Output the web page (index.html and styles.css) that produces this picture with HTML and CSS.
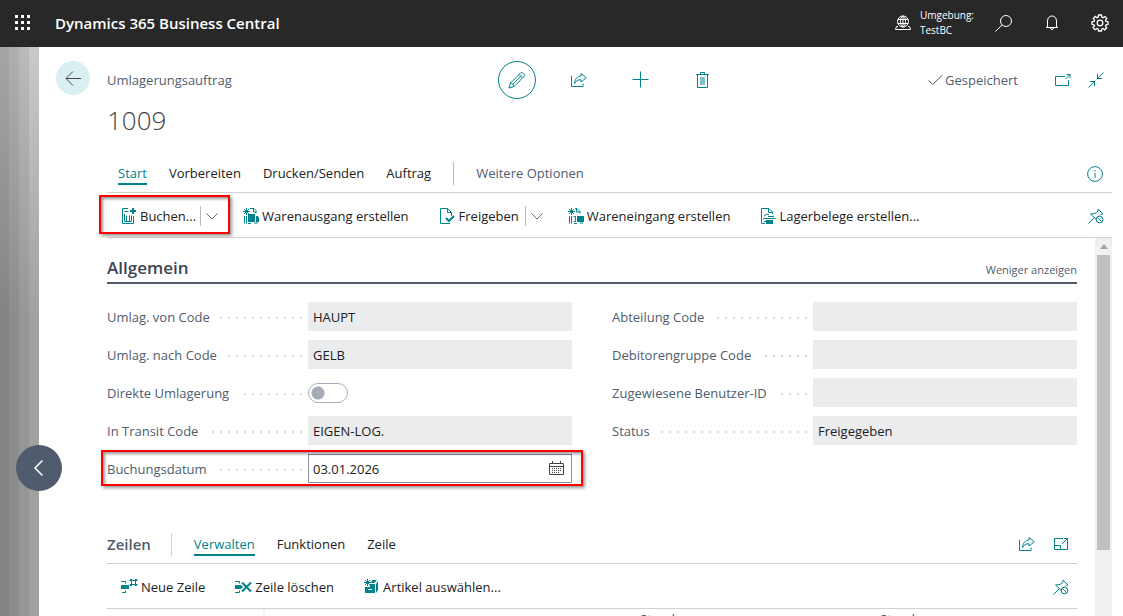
FILE: index.html
```html
<!DOCTYPE html>
<html lang="de">
<head>
<meta charset="utf-8">
<meta name="viewport" content="width=device-width, initial-scale=1">
<title>Umlagerungsauftrag 1009</title>
<link rel="stylesheet" href="styles.css">
</head>
<body>
<svg class="sprite" aria-hidden="true">
  <symbol id="share" viewBox="0 0 16 16"><path d="M.5 4v10.500h11.500v-3M10 1.500l5.200 4.300L10 10V7.700C7 7.700 5 8.700 3.500 11.500 3.700 7.500 6 4.200 10 4z"/></symbol>
  <symbol id="pin" viewBox="0 0 16 16"><path d="M.5 15.500l6-6M2.500 6l6 5.500M2.500 6l4.500-.5L10 3V1l5 5h-1.500l-1.500 1.500"/><circle cx="11.500" cy="11.500" r="3.300"/><path d="M9.300 9.300l4.500 4.500"/></symbol>
  <symbol id="chevron" viewBox="0 0 12 8"><path d="M.5 1.500L6 7l5.500-5.500"/></symbol>
</svg>

<header class="topbar">
  <button class="icon-btn" aria-label="App-Startfeld"><svg class="waffle" viewBox="0 0 16 16"><path d="M0 0h3v3H0zM6 0h3v3H6zM12 0h3v3h-3zM0 6h3v3H0zM6 6h3v3H6zM12 6h3v3h-3zM0 12h3v3H0zM6 12h3v3H6zM12 12h3v3h-3z"/></svg></button>
  <a class="brand" href="#">Dynamics 365 Business Central</a>
  <div class="environment">
    <svg class="line" width="16" height="16" viewBox="0 0 16 16"><circle cx="8" cy="6.500" r="5.500"/><ellipse cx="8" cy="6.500" rx="2.500" ry="5.500"/><path d="M3 4.500h10M3 8.500h10M8 1v11M3 11.500H1.500L.5 14.500h15l-1-3H13"/></svg>
    <span>Umgebung:<br>TestBC</span>
  </div>
  <nav class="system">
    <button class="icon-btn" aria-label="Suchen"><svg class="line" width="18" height="18" viewBox="0 0 18 18"><circle cx="11" cy="7" r="5.500"/><path d="M7 11l-6.500 6.500"/></svg></button>
    <button class="icon-btn" aria-label="Benachrichtigungen"><svg class="line" width="16" height="16" viewBox="0 0 16 16"><path d="M3.500 12V6C3.500 3 5.500 1 8 1s4.500 2 4.500 5v6M2 12.500h12M6.500 13c0 2 3 2 3 0"/></svg></button>
    <button class="icon-btn" aria-label="Einstellungen"><svg class="line gear" width="18" height="18" viewBox="0 0 18 18"><path d="M7.500 1h3l.4 2.200 1.200.5L14 2.500 15.800 4.600l-1.300 1.700.5 1.200 2 .3v2.600l-2 .4-.5 1.200 1.200 1.800-2 2-1.700-1.300-1.200.5-.3 2h-3l-.4-2-1.200-.5-1.800 1.200-2-2L3.500 12 3 10.800 1 10.400V7.800l2-.4.5-1.200L2.300 4.400l2-2 1.700 1.300 1.200-.5z"/><circle cx="9" cy="9" r="2.800"/></svg></button>
  </nav>
</header>

<div class="shell">
  <aside class="backdrop"><button class="prev" aria-label="Vorheriger"><svg class="line chev" width="12" height="18" viewBox="0 0 12 18"><path d="M9.500 1.500L2 9l7.500 7.500"/></svg></button></aside>
  <main class="page">
    <div class="page-head">
      <button class="back" aria-label="Zurück"><svg class="line" width="18" height="16" viewBox="0 0 18 16"><path d="M17 8.500H2M9 1.500l-7 7 7 7"/></svg></button>
      <div class="head-grid">
        <div class="caption">Umlagerungsauftrag</div>
        <div class="head-tools">
          <button class="tool round" aria-label="Bearbeiten"><svg class="line" width="18" height="18" viewBox="0 0 18 18"><path d="M1 17l1.500-5L12.500 2c1.500-1.500 5 1.500 3.500 3.500L6 15.500zM2.500 12c1.700.2 3 1.500 3.500 3.500M11 3.500L14.500 7M4.500 13.500l9-9"/></svg></button>
          <button class="tool" aria-label="Teilen"><svg class="line" width="16" height="16"><use href="#share"/></svg></button>
          <button class="tool" aria-label="Neu"><svg class="line" width="18" height="18" viewBox="0 0 18 18"><path d="M.5 8.500h16M8.500.5v16"/></svg></button>
          <button class="tool" aria-label="Löschen"><svg class="line" width="14" height="16" viewBox="0 0 14 16"><path d="M0 2.500h13M4.500 2V.5h4V2M1.500 3v12.500h10V3"/><path class="soft" d="M4 5h5v8H4z"/></svg></button>
        </div>
        <div class="head-right">
          <span class="saved"><svg class="line" width="15" height="12" viewBox="0 0 15 12"><path d="M.5 6.500L4.500 10.500 14.500 1"/></svg>Gespeichert</span>
          <button class="tool small" aria-label="In neuem Fenster öffnen"><svg class="line" width="16" height="14" viewBox="0 0 16 14"><path d="M10 3.500H.5v9h13V7M10.500 6L15 1.500M11.500 1.500h3.500V5"/></svg></button>
          <button class="tool small" aria-label="Verkleinern"><svg class="line" width="16" height="16" viewBox="0 0 16 16"><path d="M15.500.5L9.500 6.500M9.500 2v4.500H14M.5 15.500l6-6M2 9.500h4.500V14"/></svg></button>
        </div>
      </div>
      <h1 class="title">1009</h1>
    </div>

    <nav class="tabs rule">
      <button class="tab active">Start</button>
      <button class="tab">Vorbereiten</button>
      <button class="tab">Drucken/Senden</button>
      <button class="tab">Auftrag</button>
      <span class="divider"></span>
      <button class="tab muted">Weitere Optionen</button>
      <button class="icon-btn end" aria-label="Info"><svg class="line" width="16" height="16" viewBox="0 0 16 16"><circle cx="8" cy="8" r="7.400"/><path d="M8 7v5M8 4v1.500"/></svg></button>
    </nav>

    <div class="actions rule">
      <div class="split marked">
        <button class="action"><svg class="line" width="16" height="16" viewBox="0 0 16 16"><path d="M7 .5H1.500v15h11V8M3.500 3.500h4M3.500 6v7.500M5.500 13.500V7.500M8.500 13.500V7.500M10.500 13.500V7.500M3.500 13.500h7"/><path class="bold" d="M12 0v6M9 3h6"/></svg>Buchen...</button>
        <button class="drop" aria-label="Weitere Buchungsoptionen"><svg class="line" width="12" height="8"><use href="#chevron"/></svg></button>
      </div>
      <button class="action"><svg class="line" width="16" height="16" viewBox="0 0 16 16"><path d="M3.500 0v7M0 3.500h7M1 1l5 5M6 1L1 6M7 .5h4l2 2v3M10.500 1v3H13M1.500 8v7.500M3.500 8v7.500"/><path class="solid" d="M5 6h7v8H5zM13 8h2l1 2v4h-3z"/><path class="cut" d="M12.500 6v8"/><path d="M5 15.500h3M11 15h4"/></svg>Warenausgang erstellen</button>
      <div class="split release">
        <button class="action"><svg class="line" width="16" height="16" viewBox="0 0 16 16"><path d="M11.500 8V4.500l-4-4H.500v15H10M7.500.5v4h4"/><path class="bold" d="M6 10l3 3 5-5"/></svg>Freigeben</button>
        <button class="drop" aria-label="Weitere Freigabeoptionen"><svg class="line" width="12" height="8"><use href="#chevron"/></svg></button>
      </div>
      <button class="action"><svg class="line" width="16" height="16" viewBox="0 0 16 16"><path d="M3.500 0v7M0 3.500h7M1 1l5 5M6 1L1 6M7 .5h2l3 3v2M8.500 1v3H12M1.500 8v7.500M3.500 8v7.500M5.500 8.500h2v5h-2"/><path class="solid" d="M9 8h7v6H9z"/><path d="M6 15.500h3M12 15h3"/></svg>Wareneingang erstellen</button>
      <button class="action"><svg class="line" width="15" height="16" viewBox="0 0 15 16"><path d="M11.500 6V4L8 .5H.5v15H4M7.500.5v4h4M3 8l3-2 2 1M2 10.500h12.500M3 13.500h2"/><path class="solid" d="M7 8h6v1H7zM5 12h7v4H5z"/></svg>Lagerbelege erstellen...</button>
      <button class="icon-btn end" aria-label="Anheften"><svg class="line" width="16" height="16"><use href="#pin"/></svg></button>
    </div>

    <div class="scroller">
      <div class="body">
        <div class="section-head">
          <h2>Allgemein</h2>
          <button class="less">Weniger anzeigen</button>
        </div>
        <form class="fields">
          <div class="column">
            <div class="field"><label for="from">Umlag. von Code</label><i class="dots"></i><input id="from" value="HAUPT" readonly></div>
            <div class="field"><label for="to">Umlag. nach Code</label><i class="dots"></i><input id="to" value="GELB" readonly></div>
            <div class="field"><label for="direct">Direkte Umlagerung</label><i class="dots"></i><span class="switch"><input id="direct" type="checkbox" role="switch"></span></div>
            <div class="field"><label for="transit">In Transit Code</label><i class="dots"></i><input id="transit" value="EIGEN-LOG." readonly></div>
            <div class="field date"><label for="date">Buchungsdatum</label><i class="dots"></i><input id="date" value="03.01.2026"><button type="button" class="calendar" aria-label="Kalender"><svg class="line" width="16" height="15" viewBox="0 0 16 15"><path d="M.5 2.500h14v11H.5zM.5 5.500h14M3.500 0v3M11.500 0v3"/><path class="ticks" d="M3 7.500h10M3 9.500h10M3 11.500h8"/></svg></button></div>
          </div>
          <div class="column">
            <div class="field"><label for="dept">Abteilung Code</label><i class="dots"></i><input id="dept" readonly></div>
            <div class="field"><label for="group">Debitorengruppe Code</label><i class="dots"></i><input id="group" readonly></div>
            <div class="field"><label for="user">Zugewiesene Benutzer-ID</label><i class="dots"></i><input id="user" readonly></div>
            <div class="field"><label for="status">Status</label><i class="dots"></i><input id="status" value="Freigegeben" readonly></div>
          </div>
        </form>

        <div class="part-head">
          <h2>Zeilen</h2>
          <span class="divider"></span>
          <button class="tab active">Verwalten</button>
          <button class="tab">Funktionen</button>
          <button class="tab">Zeile</button>
          <div class="part-tools">
            <button class="icon-btn" aria-label="Teilen"><svg class="line" width="16" height="16"><use href="#share"/></svg></button>
            <button class="icon-btn" aria-label="Maximieren"><svg class="line" width="15" height="14" viewBox="0 0 15 14"><path d="M9 1.500H.5v11h13V5M.5 8.500h6v4M8 7l5.500-5.500M10 1.500h3.500V5"/></svg></button>
          </div>
        </div>
        <div class="part-actions">
          <button class="action"><svg class="line" width="17" height="16" viewBox="0 0 17 16"><path d="M0 2.500h4.500v2M4.500 11.500v2H1M10.500 0v7M14.500 0v7M8.500 1.500h8M8.500 5.500h8M9 0l7 7M16 0L9 7"/><path class="solid" d="M0 6h8v4H0z"/><path class="hole" d="M11 2h3v3h-3z"/></svg>Neue Zeile</button>
          <button class="action"><svg class="line" width="17" height="16" viewBox="0 0 17 16"><path d="M0 2.500h4.500v2M0 13.500h4.500v-2"/><path class="solid" d="M0 6h6l2 2-2 2H0z"/><path class="bold" d="M7 3.500l9 9M16 3.500l-9 9"/></svg>Zeile löschen</button>
          <button class="action"><svg class="line" width="16" height="16" viewBox="0 0 16 16"><path d="M3.500 0v7M0 3.500h7M1 1l5 5M6 1L1 6"/><path class="solid" d="M8 1h5l-3 3H7zM1 8h5V5h5v9H1zM12 5l2-3v9l-2 3z"/><path class="cut" d="M4 10.500h4"/></svg>Artikel auswählen...</button>
          <button class="icon-btn end" aria-label="Anheften"><svg class="line" width="16" height="16"><use href="#pin"/></svg></button>
        </div>
        <table class="lines"><thead><tr><th></th><th></th><th>Stand</th><th>Stand</th></tr></thead></table>
      </div>
      <div class="scrollbar"><span class="arrow"></span><span class="thumb"></span></div>
    </div>
  </main>
</div>
</body>
</html>
```
FILE: styles.css
```css
* { box-sizing: border-box; }

body {
  margin: 0;
  height: 100vh;
  display: flex;
  flex-direction: column;
  overflow: hidden;
  background: #fff;
  color: #212121;
  font: 13px/20px "Open Sans", "Noto Sans", sans-serif;
}

button {
  border: 0;
  padding: 0;
  background: none;
  color: inherit;
  font: inherit;
  white-space: nowrap;
  cursor: pointer;
}

h1, h2 { margin: 0; }
svg { display: block; flex: none; }
.sprite { position: absolute; width: 0; height: 0; }
.line { fill: none; stroke: currentColor; stroke-width: 1; }
.bold { stroke-width: 2; }
.solid { fill: currentColor; stroke: none; }
.soft { fill: #80c1c5; stroke: none; }
.hole { fill: #fff; stroke: none; }
.cut { stroke: #fff; }
.ticks { stroke-dasharray: 1 1; }
.gear { stroke-width: 1.3; }
.chev { stroke-width: 1.5; }
.icon-btn { display: flex; align-items: center; justify-content: center; color: #00838a; }

/* Application bar */
.topbar {
  flex: none;
  height: 47px;
  padding: 0 14px 2px;
  display: flex;
  align-items: center;
  background: #282828;
  color: #fff;
}
.topbar .icon-btn { width: 18px; color: #fff; }
.waffle { width: 16px; height: 16px; fill: #fff; }
.brand { margin-left: 23px; color: #fff; font-size: 15px; font-weight: 600; text-decoration: none; }
.environment { margin-left: auto; display: flex; align-items: center; gap: 9px; font-size: 10px; line-height: 15px; font-weight: 500; }
.system { display: flex; gap: 30px; margin-left: 21px; }

/* Page */
.shell { flex: 1; min-height: 0; display: flex; }
.backdrop {
  position: relative;
  flex: none;
  width: 39px;
  background:
    linear-gradient(#0000, #0003 270px),
    linear-gradient(90deg, #a5a5a5 9px, #afafaf 9px 19px, #bbb 19px 29px, #c9c9c9 29px);
}
.prev {
  position: absolute;
  z-index: 1;
  left: 16px;
  top: 398px;
  width: 46px;
  height: 46px;
  border-radius: 50%;
  display: grid;
  place-items: center;
  background: #505c6d;
  color: #fff;
}
.page { flex: 1; min-width: 0; margin-right: 11px; display: flex; flex-direction: column; }
.page-head {
  flex: none;
  display: grid;
  grid-template-columns: 34px 1fr;
  column-gap: 17px;
  padding: 14px 0 0 17px;
}
.back { width: 34px; height: 34px; border-radius: 50%; background: #d9f0f2; color: #444; display: grid; place-items: center; }
.head-grid { display: grid; grid-template-columns: 1fr auto 1fr; align-items: center; height: 38px; }
.caption { color: #505c6d; }
.head-tools { display: flex; gap: 24px; }
.tool { width: 38px; height: 38px; display: grid; place-items: center; color: #00838a; }
.round { border: 1px solid #00838a; border-radius: 50%; }
.small { width: 16px; }
.head-right { display: flex; justify-content: flex-end; align-items: center; gap: 17px; padding-right: 8px; }
.saved { display: flex; align-items: center; gap: 2px; margin-right: 20px; color: #505c6d; }
.title { grid-column: 2; font-size: 26px; line-height: 42px; font-weight: 300; color: #444; }

.rule { flex: none; margin-left: 68px; border-bottom: 1px solid #d0d1d6; }
.tabs { height: 36px; margin-top: 16px; padding: 0 9px 2px 11px; display: flex; align-items: center; gap: 22px; }
.tab { border-bottom: 2px solid transparent; line-height: 20px; padding-top: 1px; }
.tab.active { color: #00838a; border-color: #00838a; }
.muted { color: #505c6d; }
.divider { width: 1px; height: 23px; background: #b4b7bd; }
.end { margin-left: auto; }

.actions { height: 45px; padding: 1px 8px 0 14px; display: flex; align-items: center; }
.action { display: flex; align-items: center; gap: 3px; }
.action svg { color: #00838a; }
.actions > .action { margin-right: 31px; }
.split { position: relative; display: flex; align-items: center; margin-right: 25px; }
.drop { margin-left: 4px; padding: 6px 0 6px 5px; border-left: 1px solid #b4b7bd; color: #666; }
.release .drop { margin-left: 6px; }

/* Highlighted controls */
.marked::after, .date::after {
  content: "";
  position: absolute;
  inset: -11px -12px -8px -22px;
  border: 2px solid #f00;
  box-shadow: 2px 2px 3px #0006, inset 2px 2px 3px #0006;
  pointer-events: none;
}
.date::after { inset: -4px -11px -3px -6px; }

.scroller { flex: 1; min-height: 0; display: flex; overflow: hidden; }
.body { flex: 1; min-width: 0; padding: 13px 18px 0 68px; }
.section-head { display: flex; justify-content: space-between; align-items: center; height: 33px; padding-top: 2px; border-bottom: 2px solid #505c6d; }
h2 { font-size: 17px; line-height: 24px; font-weight: 600; color: #3b4552; }
.less { font-size: 11px; color: #505c6d; padding-top: 4px; }

.fields { display: grid; grid-template-columns: 1fr 1fr; gap: 40px; padding-top: 18px; }
.column { display: flex; flex-direction: column; gap: 9px; }
.field { position: relative; display: flex; align-items: center; height: 29px; }
.field label { color: #505c6d; }
.dots {
  flex: 1;
  height: 2px;
  margin: 2px 6px 0 9px;
  background: repeating-linear-gradient(270deg, #d9dadd 0 2px, #fff 2px 8px);
}
.field > input, .switch { flex: none; width: 264px; }
.field > input {
  height: 29px;
  padding: 0 5px;
  border: 0;
  border-radius: 0;
  background: #ebecee;
  color: #212121;
  font: inherit;
}
.switch { display: flex; }
.switch input {
  appearance: none;
  width: 40px;
  height: 20px;
  margin: 0;
  border: 1px solid #a6adb8;
  border-radius: 10px;
  background: radial-gradient(circle at 9px 9px, #a6adb8 6px, #fff 7px);
}
.date > input { border: 1px solid #8790a0; padding: 0 4px; background: #fff; }
.calendar { position: absolute; right: 7px; color: #444; }

/* Lines */
.part-head { display: flex; align-items: center; gap: 22px; height: 39px; margin-top: 42px; border-bottom: 1px solid #d0d1d3; }
.part-head h2 { font-size: 15px; color: #505c6d; margin-right: -2px; }
.part-head .divider { background: #d0d1d3; }
.part-tools { margin-left: auto; margin-right: 8px; display: flex; gap: 19px; }
.part-actions { display: flex; align-items: center; gap: 30px; height: 45px; padding: 1px 8px 0 14px; border-bottom: 1px solid #d0d1d3; }
.lines { width: 100%; table-layout: fixed; border-collapse: collapse; }
.lines th { padding: 1px 0 0 5px; text-align: left; font-weight: 400; line-height: 18px; font-size: 13px; color: #505c6d; }
.lines th:nth-child(3) { width: 240px; }
.lines th:nth-child(4) { width: 202px; }
.lines th:first-child { width: 157px; border-right: 2px solid #f3f3f4; }

.scrollbar { flex: none; width: 17px; background: #f1f1f1; display: flex; flex-direction: column; align-items: center; }
.arrow { margin: 6px 0; border: solid transparent; border-width: 0 4px 5px; border-bottom-color: #a3a3a3; }
.thumb { width: 13px; height: 78%; background: #c1c1c1; }
```
